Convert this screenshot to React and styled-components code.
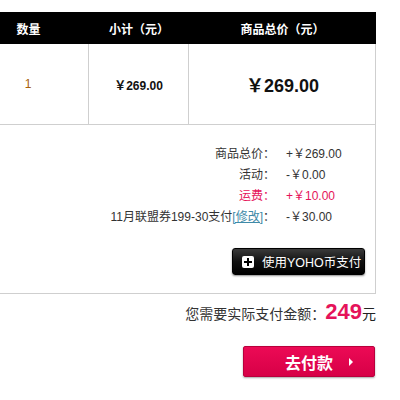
import React from 'react'
import styled, { createGlobalStyle } from 'styled-components'

const GlobalStyle = createGlobalStyle`
  body {
    margin: 0;
    background: #fff;
    font-family: "Liberation Sans", Arial, "Noto Sans CJK SC", sans-serif;
    color: #222;
  }
`

const Page = styled.div`
  width: 400px;
  height: 400px;
  overflow: hidden;
  padding-top: 12px;
  box-sizing: border-box;
`

const Cart = styled.div`
  margin-left: -32px;
  width: 408px;
`

const HeadRow = styled.div`
  display: grid;
  grid-template-columns: 121px 100px 187px;
  height: 32px;
  background: #000;
  color: #fff;
  font-size: 12px;
  font-weight: bold;
  align-items: center;
  text-align: center;
`

const BodyRow = styled.div`
  display: grid;
  grid-template-columns: 121px 100px 187px;
  height: 81px;
  box-sizing: border-box;
  border-right: 1px solid #cfcfcf;
  border-bottom: 1px solid #cfcfcf;
`

const Cell = styled.div`
  display: flex;
  align-items: center;
  justify-content: center;
  border-right: ${p => (p.$last ? 'none' : '1px solid #cfcfcf')};
  font-size: ${p => p.$size || 12}px;
  font-weight: ${p => (p.$bold ? 'bold' : 'normal')};
  color: ${p => p.$color || '#111'};
`

const Summary = styled.div`
  box-sizing: border-box;
  border-right: 1px solid #cfcfcf;
  border-bottom: 1px solid #cfcfcf;
  padding: 19px 10px 18px 0;
  display: flex;
  flex-direction: column;
  align-items: flex-end;
`

const Lines = styled.div`
  display: grid;
  grid-template-columns: auto 90px;
  font-size: 12px;
  line-height: 21px;
`

const Label = styled.div`
  text-align: right;
  color: ${p => p.$color || '#333'};
`

const Value = styled.div`
  padding-left: 11px;
  color: ${p => p.$color || '#333'};
`

const Edit = styled.a`
  color: #3f8aa8;
  text-decoration: underline;
`

const CoinButton = styled.button`
  margin-top: 20px;
  width: 133px;
  height: 27px;
  display: flex;
  align-items: center;
  gap: 8px;
  padding: 0 0 0 9px;
  border: 1px solid #000;
  border-radius: 3px;
  background: linear-gradient(#3a3a3a, #111 50%, #000);
  box-shadow: 0 1px 2px rgba(0, 0, 0, 0.45);
  color: #fff;
  font-family: inherit;
  font-size: 12.5px;
  white-space: nowrap;
  cursor: pointer;
`

const PlusBox = styled.span`
  flex: none;
  width: 12px;
  height: 12px;
  background: #fff;
  border-radius: 2px;
  display: flex;
  align-items: center;
  justify-content: center;
`

const TotalRow = styled.div`
  display: flex;
  justify-content: flex-end;
  align-items: baseline;
  padding-right: 24px;
  margin-top: 5px;
  height: 30px;
  font-size: 14px;
  color: #333;
`

const Amount = styled.span`
  font-size: 22px;
  font-weight: bold;
  color: #e5135a;
`

const Unit = styled.span`
  font-size: 14px;
  color: #222;
`

const PayButton = styled.button`
  display: flex;
  align-items: center;
  justify-content: center;
  gap: 16px;
  margin: 17px 25px 0 auto;
  width: 132px;
  height: 31px;
  border: 1px solid #b8003c;
  border-radius: 2px;
  background: linear-gradient(#ec0a55, #d70047);
  box-shadow: 0 1px 2px rgba(0, 0, 0, 0.35);
  color: #fff;
  font-family: inherit;
  font-size: 16px;
  font-weight: bold;
  padding: 0 0 0 20px;
  cursor: pointer;
`

const Arrow = styled.span`
  width: 0;
  height: 0;
  border-top: 4px solid transparent;
  border-bottom: 4px solid transparent;
  border-left: 4px solid #fff;
`

const Outside = styled.div`
  width: 400px;
`

export default function App() {
  return (
    <Page>
      <GlobalStyle />
      <Cart>
        <HeadRow>
          <div>数量</div>
          <div>小计（元）</div>
          <div>商品总价（元）</div>
        </HeadRow>
        <BodyRow>
          <Cell $color="#a8600c">1</Cell>
          <Cell $bold $size={12}>￥269.00</Cell>
          <Cell $bold $size={18} $last>￥269.00</Cell>
        </BodyRow>
        <Summary>
          <Lines>
            <Label>商品总价：</Label>
            <Value>+￥269.00</Value>
            <Label>活动：</Label>
            <Value>-￥0.00</Value>
            <Label $color="#e5135a">运费：</Label>
            <Value $color="#e5135a">+￥10.00</Value>
            <Label>11月联盟券199-30支付<Edit>[修改]</Edit>：</Label>
            <Value>-￥30.00</Value>
          </Lines>
          <CoinButton>
            <PlusBox>
              <svg width="8" height="8" viewBox="0 0 8 8">
                <path d="M3 0h2v3h3v2H5v3H3V5H0V3h3z" fill="#000" />
              </svg>
            </PlusBox>
            使用YOHO币支付
          </CoinButton>
        </Summary>
      </Cart>
      <Outside>
        <TotalRow>
          您需要实际支付金额：<Amount>249</Amount><Unit>元</Unit>
        </TotalRow>
        <PayButton>
          去付款<Arrow />
        </PayButton>
      </Outside>
    </Page>
  )
}
